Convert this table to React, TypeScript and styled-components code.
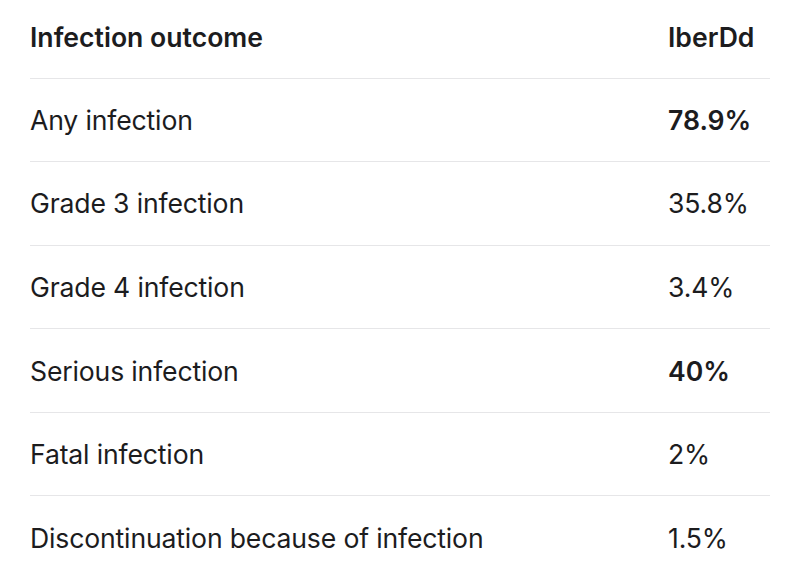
import styled, { createGlobalStyle } from "styled-components";

const GlobalStyle = createGlobalStyle`
  html, body {
    margin: 0;
    padding: 0;
    background: #ffffff;
  }
  body {
    font-family: Inter, "Noto Sans", "Liberation Sans", sans-serif;
    color: #1c1c1e;
    -webkit-font-smoothing: antialiased;
  }
`;

type Row = { outcome: string; value: string; strong?: boolean };

const rows: Row[] = [
  { outcome: "Any infection", value: "78.9%", strong: true },
  { outcome: "Grade 3 infection", value: "35.8%" },
  { outcome: "Grade 4 infection", value: "3.4%" },
  { outcome: "Serious infection", value: "40%", strong: true },
  { outcome: "Fatal infection", value: "2%" },
  { outcome: "Discontinuation because of infection", value: "1.5%" },
];

const App = () => {
  return (
    <>
      <GlobalStyle />
      <Wrapper>
        <Table>
          <thead>
            <HeadRow>
              <HeadCell>Infection outcome</HeadCell>
              <HeadCell>IberDd</HeadCell>
            </HeadRow>
          </thead>
          <tbody>
            {rows.map((row, i) => (
              <BodyRow key={row.outcome} last={i === rows.length - 1}>
                <Cell>{row.outcome}</Cell>
                <ValueCell strong={row.strong}>{row.value}</ValueCell>
              </BodyRow>
            ))}
          </tbody>
        </Table>
      </Wrapper>
    </>
  );
};

const Wrapper = styled.div`
  padding: 0 30px;
  width: 800px;
  height: 587px;
  box-sizing: border-box;
  overflow: hidden;
`;

const Table = styled.table`
  width: 740px;
  border-collapse: collapse;
  table-layout: fixed;
  font-size: 26.6px;

  td:first-child,
  th:first-child {
    width: 638px;
  }
`;

const HeadRow = styled.tr`
  height: 78px;
  border-bottom: 1.5px solid #e6e6e8;
`;

const HeadCell = styled.th`
  padding: 0 0 4px;
  text-align: left;
  font-weight: 600;
  vertical-align: middle;
`;

const BodyRow = styled.tr<{ last?: boolean }>`
  height: 83.6px;
  border-bottom: ${(p) => (p.last ? "none" : "1.5px solid #e6e6e8")};
`;

const Cell = styled.td`
  padding: 0;
  font-weight: 400;
  letter-spacing: -0.16px;
  vertical-align: middle;
`;

const ValueCell = styled(Cell)<{ strong?: boolean }>`
  font-weight: ${(p) => (p.strong ? 600 : 400)};
  letter-spacing: ${(p) => (p.strong ? "0" : "-0.16px")};
`;

export default App;
